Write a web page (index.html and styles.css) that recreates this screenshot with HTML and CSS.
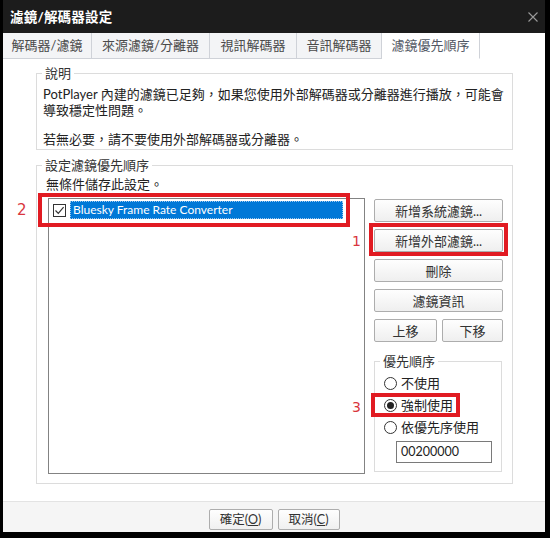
FILE: index.html
```html
<!DOCTYPE html>
<html lang="zh-Hant">
<head>
<meta charset="utf-8">
<title>濾鏡/解碼器設定</title>
<link rel="stylesheet" href="styles.css">
</head>
<body>
<div class="window">
  <div class="titlebar">
    <span class="title">濾鏡/解碼器設定</span>
    <svg class="close" width="10" height="10" viewBox="0 0 10 10"><path d="M0.5 0.5L9.5 9.5M9.5 0.5L0.5 9.5" stroke="#9a9a9a" stroke-width="1.1" fill="none"/></svg>
  </div>
  <div class="tabs">
    <div class="tab t1">解碼器/濾鏡</div>
    <div class="tab t2">來源濾鏡/分離器</div>
    <div class="tab t3">視訊解碼器</div>
    <div class="tab t4">音訊解碼器</div>
    <div class="tab t5 active">濾鏡優先順序</div>
    <div class="tab-fill"></div>
  </div>
  <div class="content">
    <fieldset class="group desc">
      <legend>說明</legend>
      <p class="p1">PotPlayer 內建的濾鏡已足夠，如果您使用外部解碼器或分離器進行播放，可能會<br>導致穩定性問題。</p>
      <p class="p2">若無必要，請不要使用外部解碼器或分離器。</p>
    </fieldset>
    <fieldset class="group prio">
      <legend>設定濾鏡優先順序</legend>
      <div class="note">無條件儲存此設定。</div>
      <div class="body">
        <div class="listbox">
          <div class="item">
            <span class="check"><svg width="11" height="11" viewBox="0 0 11 11"><path d="M1.5 5.5L4.3 8.3L9.6 2.2" stroke="#333" stroke-width="1.2" fill="none"/></svg></span>
            <span class="item-text">Bluesky Frame Rate Converter</span>
          </div>
        </div>
        <div class="side">
          <button class="btn">新增系統濾鏡...</button>
          <button class="btn">新增外部濾鏡...</button>
          <button class="btn">刪除</button>
          <button class="btn">濾鏡資訊</button>
          <div class="btn-row">
            <button class="btn up">上移</button>
            <button class="btn down">下移</button>
          </div>
          <fieldset class="group order">
            <legend>優先順序</legend>
            <div class="radio-row"><span class="radio"></span>不使用</div>
            <div class="radio-row"><span class="radio on"></span>強制使用</div>
            <div class="radio-row"><span class="radio"></span>依優先序使用</div>
            <div class="field">00200000</div>
          </fieldset>
        </div>
      </div>
    </fieldset>
  </div>
  <div class="footer">
    <button class="fbtn ok">確定(<u>O</u>)</button>
    <button class="fbtn cancel">取消(<u>C</u>)</button>
  </div>

  <div class="mark box2"></div>
  <div class="mark box1"></div>
  <div class="mark box3"></div>
  <div class="num n2">2</div>
  <div class="num n1">1</div>
  <div class="num n3">3</div>
</div>
</body>
</html>
```
FILE: styles.css
```css
* { box-sizing: border-box; }
html, body { margin: 0; padding: 0; }
body {
  background: #000;
  width: 550px;
  height: 538px;
  overflow: hidden;
  font-family: Lato, "Noto Sans CJK TC", sans-serif;
  font-size: 13px;
  color: #222;
}
.window {
  position: relative;
  margin-left: 3px;
  width: 542px;
  height: 532px;
  background: #fff;
  display: flex;
  flex-direction: column;
}
.titlebar {
  height: 33px;
  flex: none;
  background: #1c1c1c;
  color: #fff;
  display: flex;
  align-items: center;
  justify-content: space-between;
  padding: 0 7px 0 7px;
}
.title {
  font-weight: bold;
  font-size: 13.5px;
  line-height: 16px;
  letter-spacing: 0.2px;
}
.close { display: block; margin-top: 1px; }
.tabs {
  height: 26px;
  flex: none;
  display: flex;
}
.tab {
  height: 26px;
  display: flex;
  align-items: center;
  justify-content: center;
  background: #f3f4f6;
  border-right: 1px solid #cfd2d8;
  border-bottom: 1px solid #cfd2d8;
  color: #4a4a4a;
  line-height: 16px;
  padding-bottom: 1px;
}
.t1 { width: 89px; }
.t2 { width: 118px; }
.t3 { width: 87px; }
.t4 { width: 85px; }
.t5 { width: 98px; }
.tab.active {
  background: #fff;
  border-bottom-color: #fff;
  color: #525864;
}
.tab-fill { flex: 1; }
.content {
  flex: 1;
  padding: 7px 32px 0 33px;
}
.group {
  margin: 0;
  border: 1px solid #dcdcdc;
  min-width: 0;
}
.group legend {
  padding: 0 3px;
  line-height: 15px;
  color: #333;
}
.desc { padding: 5px 6px 2px 6px; }
.desc legend { margin-left: -1px; }
.desc p { margin: 0; line-height: 16px; }
.desc .p2 { margin-top: 13px; }
.prio {
  margin-top: 8px;
  padding: 3px 9px 9px 9px;
}
.prio > legend { margin-left: -4px; }
.note { line-height: 16px; }
.body {
  margin-top: 6px;
  display: flex;
  align-items: flex-start;
  gap: 9px;
  margin-left: 2px;
}
.listbox {
  width: 317px;
  height: 276px;
  border: 1px solid #838383;
  padding: 2px 0 0 4px;
}
.item {
  display: flex;
  align-items: center;
  height: 18px;
}
.check {
  width: 13px;
  height: 13px;
  border: 1px solid #333;
  display: flex;
  align-items: center;
  justify-content: center;
  background: #fff;
  flex: none;
}
.check svg { display: block; }
.item-text {
  margin-left: 4px;
  width: 273px;
  height: 18px;
  background: #0078d7;
  color: #fff;
  outline: 1px dotted #9ec8ee;
  outline-offset: -1px;
  padding-left: 3px;
  font-family: Lato, sans-serif;
  font-size: 12px;
  line-height: 18px;
}
.side {
  width: 129px;
  margin-top: 1px;
  display: flex;
  flex-direction: column;
  gap: 7px;
}
.btn {
  height: 23px;
  margin: 0;
  padding: 0;
  border: 1px solid #adadad;
  border-radius: 2px;
  background: linear-gradient(#fefefe, #efefef);
  font-family: Lato, "Noto Sans CJK TC", sans-serif;
  font-size: 13px;
  color: #333;
  line-height: 16px;
}
.btn-row {
  display: flex;
  gap: 5px;
}
.btn.up { width: 63px; }
.btn.down { width: 61px; }
.order {
  margin-top: 5px;
  width: 128px;
  padding: 3px 9px 8px 9px;
}
.order > legend { margin-left: -4px; }
.radio-row {
  height: 22px;
  display: flex;
  align-items: center;
  gap: 4px;
  line-height: 16px;
  color: #222;
}
.radio {
  width: 13px;
  height: 13px;
  border: 1px solid #333;
  border-radius: 50%;
  background: #fff;
  display: flex;
  align-items: center;
  justify-content: center;
  flex: none;
}
.radio.on::after {
  content: "";
  width: 7px;
  height: 7px;
  border-radius: 50%;
  background: #222;
}
.field {
  margin: 3px 0 0 12px;
  width: 96px;
  height: 22px;
  border: 1px solid #7a7a7a;
  padding-left: 4px;
  font-family: Lato, sans-serif;
  font-size: 12.5px;
  line-height: 20px;
  color: #222;
}
.footer {
  height: 31px;
  flex: none;
  border-top: 1px solid #e3e3e3;
  background: #f5f5f5;
  display: flex;
  justify-content: center;
  align-items: flex-start;
  gap: 5px;
  padding-top: 7px;
}
.fbtn {
  height: 21px;
  margin: 0;
  padding: 0;
  border: 1px solid #adadad;
  border-radius: 2px;
  background: linear-gradient(#fefefe, #f0f0f0);
  font-family: Lato, "Noto Sans CJK TC", sans-serif;
  font-size: 12.5px;
  color: #333;
  line-height: 16px;
}
.fbtn.ok { width: 64px; }
.fbtn.cancel { width: 62px; }
.mark {
  position: absolute;
  border: 4px solid #e11b22;
}
.box2 { left: 35px; top: 193px; width: 312px; height: 34px; }
.box1 { left: 366px; top: 223px; width: 139px; height: 33px; }
.box3 { left: 368px; top: 393px; width: 89px; height: 24px; }
.num {
  position: absolute;
  color: #d9363e;
  font-family: "DejaVu Sans", sans-serif;
  font-size: 15px;
  line-height: 18px;
}
.n2 { left: 14px; top: 201px; }
.n1 { left: 349px; top: 232px; font-size: 14px; }
.n3 { left: 349px; top: 398px; font-size: 14px; }
```
